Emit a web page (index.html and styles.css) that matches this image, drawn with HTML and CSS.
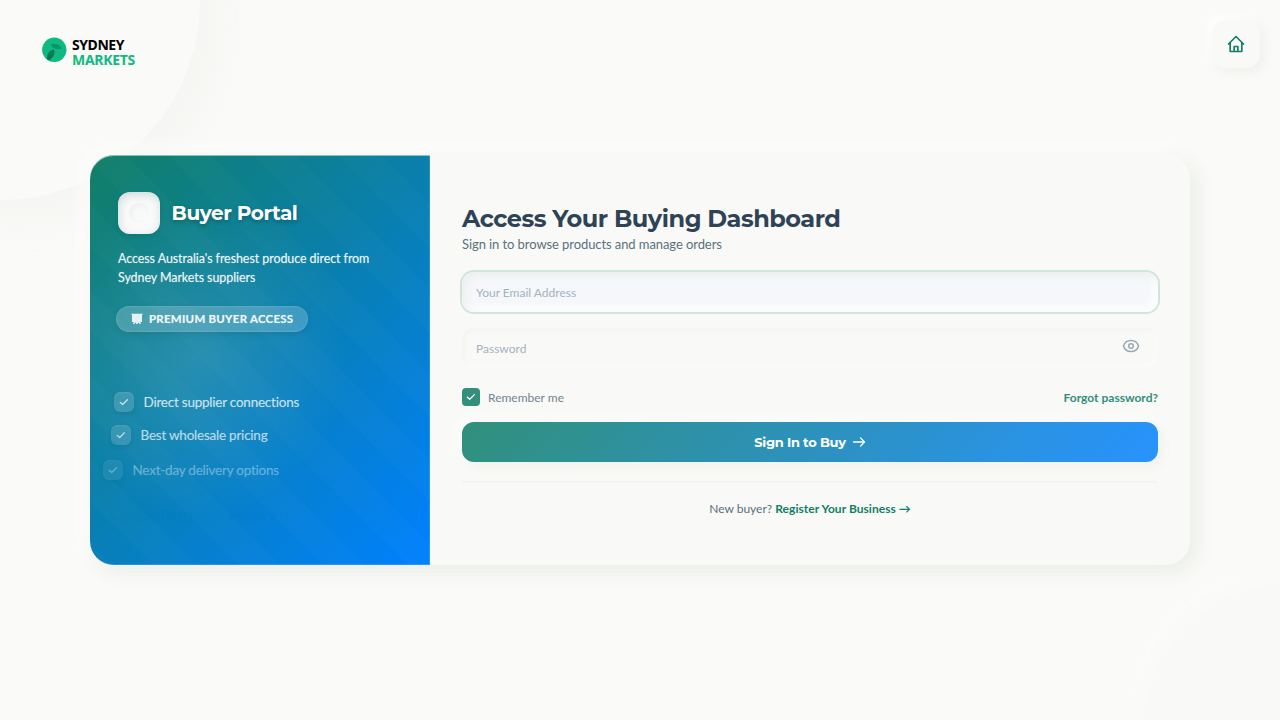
FILE: index.html
```
<!DOCTYPE html>
<html lang="en">
<head>
<meta charset="utf-8">
<title>Buyer Portal</title>
<link rel="stylesheet" href="styles.css">
</head>
<body>
<div class="backdrop"><div class="orb orb-top"></div><div class="orb orb-bottom"></div></div>
<header class="topbar">
  <div class="logo">
    <svg class="logo-mark" width="25" height="25" viewBox="0 0 25 25"><circle cx="12.3" cy="12.8" r="12.2" fill="#10b981"/><path d="M8.800 7.100C13.500 6.100 18 7.300 19.800 11.600C15 13.100 10 12.100 8.800 7.100Z" fill="#059669"/><path d="M5 22.500C5 17 6.800 13.300 12 12.800C13.300 16.500 11.500 20 8 23Z" fill="#047857"/></svg>
    <div class="logo-text"><span>SYDNEY</span><span class="logo-green">MARKETS</span></div>
  </div>
  <a class="home"><svg width="20" height="20" viewBox="0 0 24 24" fill="none" stroke="#117f66" stroke-width="2" stroke-linecap="round" stroke-linejoin="round"><path d="M3 12 12 3l9 9M5 10.500v10.500h14V10.500M9.800 21v-6h4.400v6"/></svg></a>
</header>
<main class="card">
  <section class="promo">
    <div class="brand"><div class="brand-icon"><i class="brand-dot"></i></div><h2 class="brand-name">Buyer Portal</h2></div>
    <p class="intro">Access Australia's freshest produce direct from<br>Sydney Markets suppliers</p>
    <div class="badge"><svg width="12" height="12" viewBox="0 0 12 12" fill="#e4f2f5"><path d="M.3.700H11.700V1.700H11V9H9.300L10 11H8.600L7.600 9.500 6.500 11H5.500L4.400 9.500 3.400 11H2L2.700 9H1V1.700H.3Z"/></svg><span>PREMIUM BUYER ACCESS</span></div>
    <ul class="features">
      <li class="feature feature-one"><span class="tick"><svg width="12" height="12" viewBox="0 0 12 12"><path d="M2.300 6.400 4.700 8.500 9.400 3.800"/></svg></span>Direct supplier connections</li>
      <li class="feature feature-two"><span class="tick"><svg width="12" height="12" viewBox="0 0 12 12"><path d="M2.300 6.400 4.700 8.500 9.400 3.800"/></svg></span>Best wholesale pricing</li>
      <li class="feature feature-three"><span class="tick"><svg width="12" height="12" viewBox="0 0 12 12"><path d="M2.300 6.400 4.700 8.500 9.400 3.800"/></svg></span>Next-day delivery options</li>
    </ul>
    <div class="trust"><span>● SSL SECURED</span><span>● VERIFIED</span></div>
  </section>
  <section class="login">
    <h1 class="title">Access Your Buying Dashboard</h1>
    <p class="subtitle">Sign in to browse products and manage orders</p>
    <div class="field field-focus">Your Email Address</div>
    <div class="field"><span>Password</span><svg width="18" height="18" viewBox="0 0 18 18" fill="none" stroke="#97a9b5" stroke-width="1.500"><path d="M1.500 9C2.500 5.400 5.400 3.500 9 3.500S15.500 5.400 16.500 9C15.500 12.600 12.600 14.500 9 14.500S2.500 12.600 1.500 9Z"/><circle cx="9" cy="9" r="2.300"/></svg></div>
    <div class="options"><div class="remember"><span class="checkbox"><svg width="12" height="12" viewBox="0 0 12 12"><path d="M2.300 6.200 4.700 8.300 9.400 3.600"/></svg></span>Remember me</div><a class="forgot">Forgot password?</a></div>
    <div class="submit"><span>Sign In to Buy</span><svg width="14" height="14" viewBox="0 0 14 14" fill="none" stroke="#fff" stroke-width="1.300" stroke-linecap="round" stroke-linejoin="round"><path d="M1.500 7H12.300M8.500 2.900 12.500 7 8.500 11.100"/></svg></div>
    <p class="register">New buyer? <a class="register-link">Register Your Business →</a></p>
  </section>
</main>
</body>
</html>
```

FILE: styles.css
```
* { box-sizing: border-box; margin: 0; padding: 0; }
body { width: 1280px; height: 720px; overflow: hidden; position: relative; background: #fafaf8; font-family: Lato, sans-serif; }
.backdrop { position: absolute; inset: 0; overflow: hidden; }
.orb { position: absolute; border-radius: 50%; background: #fafaf8; }
.orb-top { width: 400px; height: 400px; left: -200px; top: -200px; box-shadow: 16px 16px 50px rgba(225,236,220,.2); }
.orb-bottom { width: 300px; height: 300px; left: 1130px; top: 570px; background: #f9f9f7; box-shadow: inset 12px 12px 16px rgba(255,255,255,.3), -8px -8px 20px rgba(255,255,255,.2); }
.topbar { position: relative; height: 155px; display: flex; justify-content: space-between; align-items: flex-start; padding: 20px 20px 0 42px; }
.logo { display: flex; gap: 5px; padding-top: 17px; }
.logo-text { display: flex; flex-direction: column; font: 700 14px/15px "Noto Sans", sans-serif; letter-spacing: -.45px; color: #000; }
.logo-green { color: #10b981; letter-spacing: -.3px; }
.home { width: 48px; height: 48px; border-radius: 14px; display: flex; align-items: center; justify-content: center; background: #f9f9f7; box-shadow: 4px 4px 12px #eff1ec, -4px -4px 12px #fff; }
.card { position: relative; display: flex; width: 1100px; height: 410px; margin-left: 90px; border-radius: 24px; background: #f9f9f7; box-shadow: 6px 6px 20px #e9ede6, -6px -6px 20px #fff; }
.promo { width: 340px; padding: 36px 28px 0; border-radius: 24px 0 0 24px; color: #fff; box-shadow: inset -1px -1px 0 rgba(255,255,255,.15), inset 0 1px 0 rgba(255,255,255,.5); background: repeating-linear-gradient(45deg, rgba(255,255,255,.014) 0 15px, transparent 15px 45px, rgba(255,255,255,.014) 45px 60px), radial-gradient(circle at 30% 50%, rgba(255,255,255,.12), transparent 50%), linear-gradient(135deg, #117f66, #0080ff); }
.brand { display: flex; align-items: center; gap: 11.500px; height: 43px; }
.brand-icon { width: 42px; height: 42px; border-radius: 12px; display: flex; align-items: center; justify-content: center; background: #f9fafa; box-shadow: inset 1px 3px 8px rgba(165,185,190,.5), 0 2px 5px rgba(0,0,0,.06); }
.brand-dot { width: 20px; height: 20px; border-radius: 50%; background: #f8f9f9; box-shadow: inset 2px 2px 4px #edf0f0; }
.brand-name { font: 700 20px/26px Montserrat, "Open Sans", sans-serif; letter-spacing: -.4px; text-shadow: 0 2px 4px rgba(0,0,0,.25); }
.intro { height: 57px; margin-top: 15px; font-size: 12.500px; letter-spacing: -.08px; line-height: 19px; color: rgba(255,255,255,.87); text-shadow: 0 0 1px rgba(255,255,255,.5); }
.badge { width: 192px; height: 26px; margin-left: -2px; border-radius: 13px; display: flex; align-items: center; padding-left: 14px; gap: 6px; font-size: 11.500px; font-weight: 900; letter-spacing: 0; line-height: 14px; color: rgba(255,255,255,.87); background: rgba(255,255,255,.2); border: 1px solid rgba(255,255,255,.1); box-shadow: 0 2px 6px rgba(0,0,0,.1); white-space: nowrap; }
.badge span { margin-top: -1px; font-weight: 700; letter-spacing: .24px; text-shadow: 0 0 1px rgba(255,255,255,.5); }
.features { list-style: none; margin-top: 59px; display: flex; flex-direction: column; gap: 13px; }
.feature { display: flex; align-items: center; gap: 9.500px; height: 21px; font-size: 13.500px; letter-spacing: -.23px; color: #fff; white-space: nowrap; text-shadow: 0 0 1px rgba(255,255,255,.3); }
.feature-one { margin-left: -4px; opacity: .76; }
.feature-two { margin: -1px 0 1px -7px; opacity: .69; }
.feature-three { margin-left: -15px; opacity: .36; }
.tick { width: 20px; height: 20px; border-radius: 6px; display: flex; align-items: center; justify-content: center; background: rgba(255,255,255,.2); box-shadow: 0 2px 4px rgba(0,0,0,.12), inset 0 1px 2px rgba(255,255,255,.15); }
.tick path, .checkbox path { fill: none; stroke: #fff; stroke-width: 1.300; stroke-linecap: round; stroke-linejoin: round; }
.trust { display: flex; gap: 36px; margin: 30px 0 0 -8px; font-size: 11.500px; font-weight: 700; color: #003c80; opacity: .025; }
.login { width: 760px; padding: 49px 32px 0; }
.title { font: 700 24px/30px Montserrat, "Open Sans", sans-serif; letter-spacing: -.49px; color: #2f4356; white-space: nowrap; }
.subtitle { height: 22px; font-size: 13px; letter-spacing: -.08px; line-height: 21px; color: #5a727d; }
.field { height: 40px; margin-top: 16px; padding: 1px 18px 0 14px; border-radius: 12px; display: flex; align-items: center; justify-content: space-between; font-size: 12px; color: #a3b3bf; background: #f9f9f7; box-shadow: inset 2px 2px 5px #f3f4f1, inset -2px -2px 5px #fdfdfc; }
.field svg { margin-top: -5px; }
.field-focus { background: #f5f7fa; box-shadow: 0 0 0 2px #d0e6dd, inset 4px 4px 8px #edf0ef, inset -4px -4px 8px #fff; }
.options { display: flex; justify-content: space-between; align-items: center; height: 20px; margin-top: 19px; font-size: 12px; color: #73848f; }
.remember { display: flex; align-items: center; gap: 8px; }
.checkbox { width: 18px; height: 18px; border-radius: 4px; display: flex; align-items: center; justify-content: center; background: #318f7a; }
.forgot { font-weight: 700; color: #318f7a; }
.submit { height: 40px; margin-top: 15px; border-radius: 12px; display: flex; align-items: center; justify-content: center; gap: 6px; color: #fff; font: 700 13px/20px Montserrat, "Open Sans", sans-serif; letter-spacing: -.26px; background: linear-gradient(135deg, #31907a, #2893ff); box-shadow: 4px 4px 12px #eff2ec, -4px -4px 12px #fdfdfc; }
.register { margin-top: 19px; padding-top: 17px; border-top: 2px solid #f3f4f3; text-align: center; font-size: 12px; line-height: 17px; color: #5a6f7d; }
.register-link { font-weight: 700; letter-spacing: .04px; color: #117f66; }
```
